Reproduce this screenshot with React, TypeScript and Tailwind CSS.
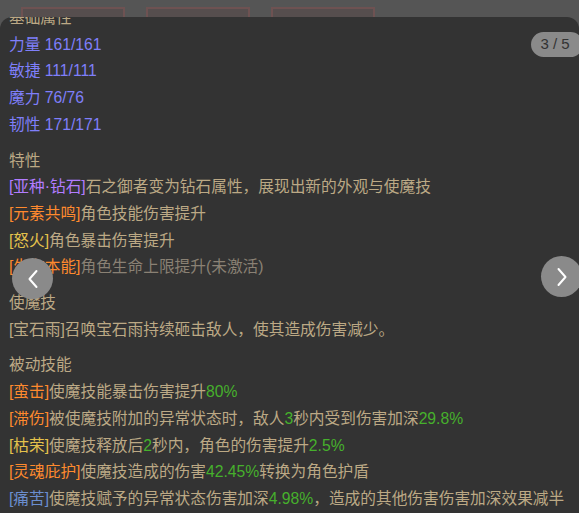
import type { ReactNode } from 'react';

const FONT = { fontFamily: '"Liberation Sans", "Noto Sans CJK SC", sans-serif' };

type Seg = { t: string; c?: string };

const TXT = 'text-[#bca985]';

function Line({ segs }: { segs: Seg[] }) {
  return (
    <div className="whitespace-nowrap leading-[26.7px]">
      {segs.map((s, i) => (
        <span key={i} className={s.c ?? TXT}>
          {s.t}
        </span>
      ))}
    </div>
  );
}

function Section({ title, children, first }: { title: string; children: ReactNode; first?: boolean }) {
  return (
    <div className={first ? '' : 'mt-[9px]'}>
      <div className={`leading-[26.7px] ${TXT}`}>{title}</div>
      {children}
    </div>
  );
}

const PURPLE = 'text-[#b27cff]';
const ORANGE = 'text-[#ff8a2e]';
const YELLOW = 'text-[#e4c24c]';
const BLUE = 'text-[#6b8ecf]';
const GREEN = 'text-[#46b02c]';
const GRAY = 'text-[#8a8174]';
const STAT = 'text-[#7f7ffa]';

function Chevron({ dir }: { dir: 'left' | 'right' }) {
  return (
    <svg width="14" height="22" viewBox="0 0 14 22" fill="none">
      <path
        d={dir === 'left' ? 'M10.5 3 L3.5 11 L10.5 19' : 'M3.5 3 L10.5 11 L3.5 19'}
        stroke="white"
        strokeWidth="2"
        strokeLinecap="round"
        strokeLinejoin="round"
      />
    </svg>
  );
}

export default function App() {
  return (
    <div className="relative h-[513px] w-[579px] overflow-hidden bg-[#555555] text-[15.7px]" style={FONT}>
      {/* cards peeking behind the panel */}
      <div className="absolute left-[21px] top-[7px] flex gap-[21px]">
        {[0, 1, 2].map(i => (
          <div key={i} className="h-[30px] w-[104px] border-2 border-[#6e5252] bg-[#564e4e]" />
        ))}
      </div>

      <div className="absolute inset-x-0 bottom-0 top-[17px] overflow-hidden rounded-t-[12px] bg-[#333333]">
        <div className="mt-[-12px] pl-[9px]">
          <Section title="基础属性" first>
            <Line segs={[{ t: '力量 161/161', c: STAT }]} />
            <Line segs={[{ t: '敏捷 111/111', c: STAT }]} />
            <Line segs={[{ t: '魔力 76/76', c: STAT }]} />
            <Line segs={[{ t: '韧性 171/171', c: STAT }]} />
          </Section>

          <Section title="特性">
            <Line segs={[{ t: '[亚种·钻石]', c: PURPLE }, { t: '石之御者变为钻石属性，展现出新的外观与使魔技' }]} />
            <Line segs={[{ t: '[元素共鸣]', c: ORANGE }, { t: '角色技能伤害提升' }]} />
            <Line segs={[{ t: '[怒火]', c: YELLOW }, { t: '角色暴击伤害提升' }]} />
            <Line segs={[{ t: '[生存本能]', c: ORANGE }, { t: '角色生命上限提升(未激活)', c: GRAY }]} />
          </Section>

          <Section title="使魔技">
            <Line segs={[{ t: '[宝石雨]召唤宝石雨持续砸击敌人，使其造成伤害减少。' }]} />
          </Section>

          <Section title="被动技能">
            <Line segs={[{ t: '[蛮击]', c: ORANGE }, { t: '使魔技能暴击伤害提升' }, { t: '80%', c: GREEN }]} />
            <Line
              segs={[
                { t: '[滞伤]', c: ORANGE },
                { t: '被使魔技附加的异常状态时，敌人' },
                { t: '3', c: GREEN },
                { t: '秒内受到伤害加深' },
                { t: '29.8%', c: GREEN },
              ]}
            />
            <Line
              segs={[
                { t: '[枯荣]', c: YELLOW },
                { t: '使魔技释放后' },
                { t: '2', c: GREEN },
                { t: '秒内，角色的伤害提升' },
                { t: '2.5%', c: GREEN },
              ]}
            />
            <Line
              segs={[
                { t: '[灵魂庇护]', c: ORANGE },
                { t: '使魔技造成的伤害' },
                { t: '42.45%', c: GREEN },
                { t: '转换为角色护盾' },
              ]}
            />
            <Line
              segs={[
                { t: '[痛苦]', c: BLUE },
                { t: '使魔技赋予的异常状态伤害加深' },
                { t: '4.98%', c: GREEN },
                { t: '，造成的其他伤害伤害加深效果减半' },
              ]}
            />
          </Section>
        </div>

        <div className="absolute right-[-4px] top-[15px] flex h-[25px] w-[52px] items-center justify-center rounded-full bg-[#8a8a8a] pr-[4px] text-[15px] text-[#333333]">
          3 / 5
        </div>
      </div>

      <button className="absolute left-[12px] top-[258px] flex h-[41px] w-[41px] items-center justify-center rounded-full bg-[#8a8a8a]">
        <Chevron dir="left" />
      </button>
      <button className="absolute left-[541px] top-[256px] flex h-[41px] w-[41px] items-center justify-center rounded-full bg-[#8a8a8a]">
        <Chevron dir="right" />
      </button>
    </div>
  );
}
